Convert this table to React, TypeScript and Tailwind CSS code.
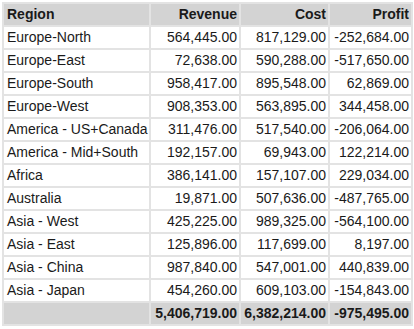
const rows: [string, string, string, string][] = [
  ["Europe-North", "564,445.00", "817,129.00", "-252,684.00"],
  ["Europe-East", "72,638.00", "590,288.00", "-517,650.00"],
  ["Europe-South", "958,417.00", "895,548.00", "62,869.00"],
  ["Europe-West", "908,353.00", "563,895.00", "344,458.00"],
  ["America - US+Canada", "311,476.00", "517,540.00", "-206,064.00"],
  ["America - Mid+South", "192,157.00", "69,943.00", "122,214.00"],
  ["Africa", "386,141.00", "157,107.00", "229,034.00"],
  ["Australia", "19,871.00", "507,636.00", "-487,765.00"],
  ["Asia - West", "425,225.00", "989,325.00", "-564,100.00"],
  ["Asia - East", "125,896.00", "117,699.00", "8,197.00"],
  ["Asia - China", "987,840.00", "547,001.00", "440,839.00"],
  ["Asia - Japan", "454,260.00", "609,103.00", "-154,843.00"],
];

export default function App() {
  return (
    <div
      className="w-[414px] h-[329px] bg-white pl-[2px] pt-[2px] text-[14px] text-[#1a1a1a]"
      style={{ fontFamily: '"Liberation Sans", Arial, sans-serif' }}
    >
      <table className="border-separate border-spacing-[2px] bg-[#e3e3e3] leading-[21px]">
        <colgroup>
          <col className="w-[145px]" />
          <col className="w-[88px]" />
          <col className="w-[87px]" />
          <col className="w-[81px]" />
        </colgroup>
        <thead>
          <tr className="h-[21px] bg-[#d3d3d3] font-bold">
            <th className="text-left pl-[3px] p-0">Region</th>
            <th className="text-right pr-[2px] p-0">Revenue</th>
            <th className="text-right pr-[2px] p-0">Cost</th>
            <th className="text-right pr-[2px] p-0">Profit</th>
          </tr>
        </thead>
        <tbody>
          {rows.map((r) => (
            <tr key={r[0]} className="h-[21px] bg-white">
              <td className="p-0 pl-[3px] whitespace-nowrap">{r[0]}</td>
              <td className="p-0 pr-[2px] text-right">{r[1]}</td>
              <td className="p-0 pr-[2px] text-right">{r[2]}</td>
              <td className="p-0 pr-[2px] text-right">{r[3]}</td>
            </tr>
          ))}
          <tr className="h-[21px] bg-[#d3d3d3] font-bold">
            <td className="p-0"></td>
            <td className="p-0 pr-[2px] text-right">5,406,719.00</td>
            <td className="p-0 pr-[2px] text-right">6,382,214.00</td>
            <td className="p-0 pr-[2px] text-right">-975,495.00</td>
          </tr>
        </tbody>
      </table>
    </div>
  );
}
